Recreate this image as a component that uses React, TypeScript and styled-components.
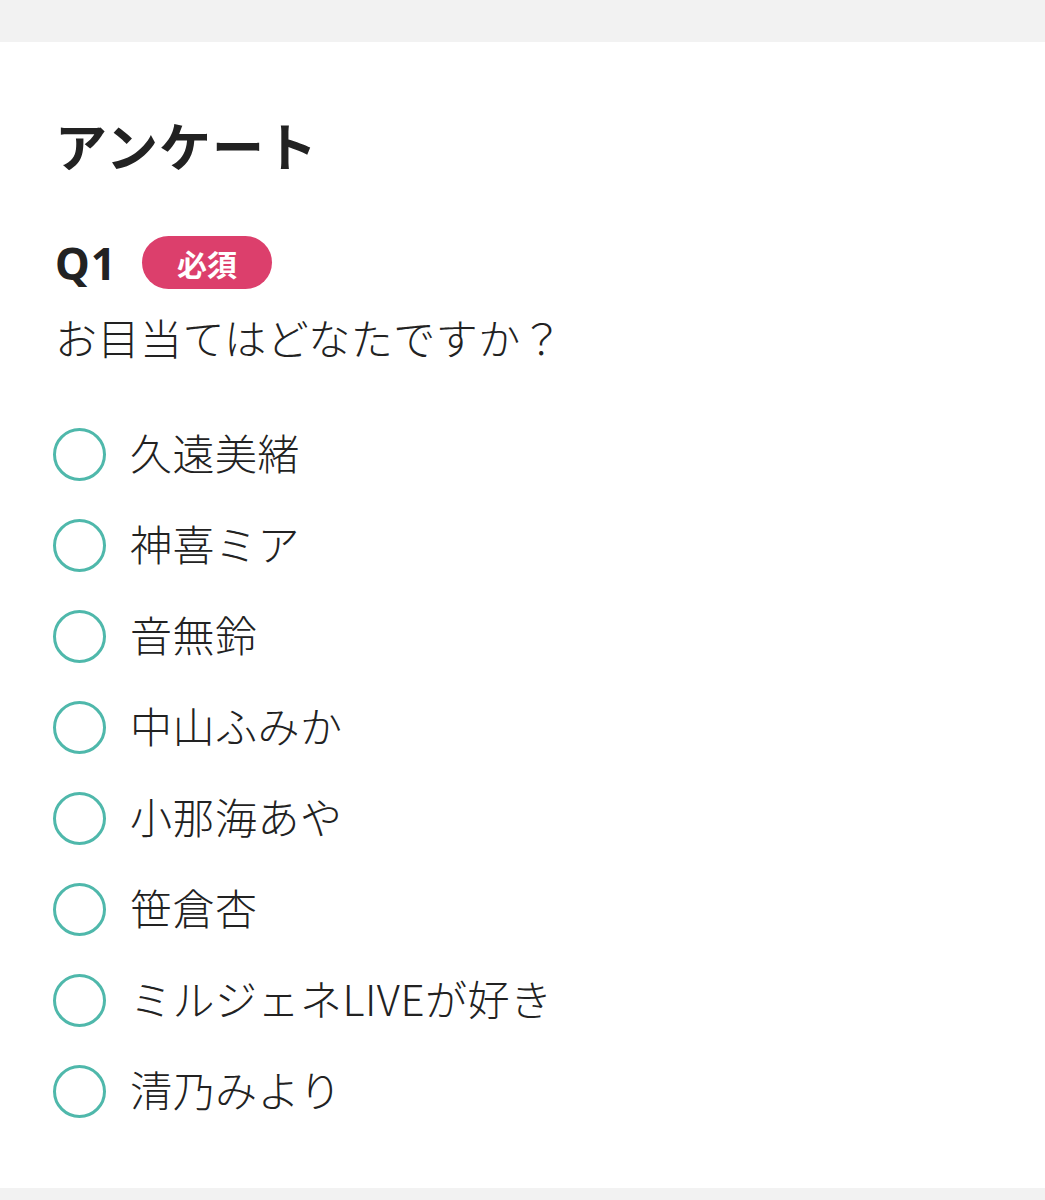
import styled, { createGlobalStyle } from "styled-components";

const GlobalStyle = createGlobalStyle`
  html, body {
    margin: 0;
    padding: 0;
    background: #f2f2f2;
  }
  body {
    font-family: "Noto Sans CJK JP", "Noto Sans", sans-serif;
    color: #222;
  }
`;

const Page = styled.div`
  padding-top: 42px;
  min-height: 1200px;
  box-sizing: border-box;
`;

const Card = styled.section`
  background: #fff;
  padding: 72px 55px 70px;
  box-sizing: border-box;
  height: 1146px;
`;

const Title = styled.h1`
  margin: 0;
  font-size: 52px;
  line-height: 62px;
  font-weight: 700;
  letter-spacing: 1px;
`;

const QuestionHead = styled.div`
  display: flex;
  align-items: center;
  gap: 25px;
  margin-top: 60px;
  height: 53px;
`;

const QNumber = styled.span`
  font-family: "Noto Sans", sans-serif;
  font-size: 44px;
  font-weight: 700;
  letter-spacing: 1px;
`;

const Badge = styled.span`
  display: inline-flex;
  align-items: center;
  justify-content: center;
  width: 130px;
  height: 53px;
  border-radius: 27px;
  background: #dc3f6c;
  color: #fff;
  font-size: 30px;
  font-weight: 700;
`;

const QuestionText = styled.p`
  margin: 18px 0 0;
  font-size: 42px;
  line-height: 59px;
  font-weight: 300;
  letter-spacing: 0.5px;
`;

const Options = styled.div`
  display: flex;
  flex-direction: column;
  gap: 38px;
  margin-top: 62px;
`;

const Option = styled.label`
  display: flex;
  align-items: center;
  gap: 24px;
  height: 53px;
  cursor: pointer;
`;

const Radio = styled.input.attrs({ type: "radio" })`
  appearance: none;
  margin: 0 0 0 -2px;
  width: 53px;
  height: 53px;
  border: 3px solid #4fb8ab;
  border-radius: 50%;
  box-sizing: border-box;
  background: #fff;
  flex-shrink: 0;
`;

const OptionText = styled.span`
  font-size: 42px;
  line-height: 53px;
  font-weight: 300;
  letter-spacing: 0.5px;
  margin-top: -6px;
`;

const choices = [
  "久遠美緒",
  "神喜ミア",
  "音無鈴",
  "中山ふみか",
  "小那海あや",
  "笹倉杏",
  "ミルジェネLIVEが好き",
  "清乃みより",
];

export default function App() {
  return (
    <>
      <GlobalStyle />
      <Page>
        <Card>
          <Title>アンケート</Title>
          <QuestionHead>
            <QNumber>Q1</QNumber>
            <Badge>必須</Badge>
          </QuestionHead>
          <QuestionText>お目当てはどなたですか？</QuestionText>
          <Options>
            {choices.map((c) => (
              <Option key={c}>
                <Radio name="q1" value={c} />
                <OptionText>{c}</OptionText>
              </Option>
            ))}
          </Options>
        </Card>
      </Page>
    </>
  );
}
